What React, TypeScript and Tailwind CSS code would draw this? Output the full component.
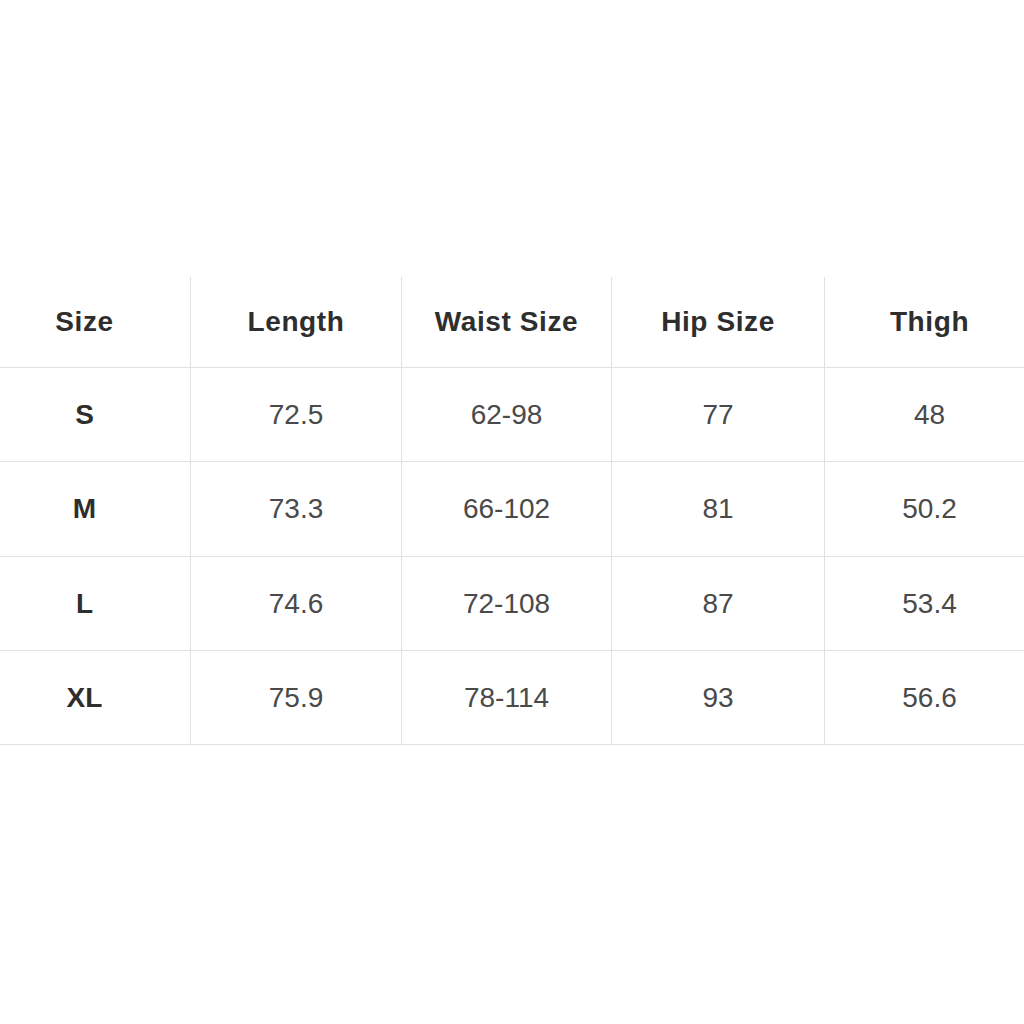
const headers = ["Size", "Length", "Waist Size", "Hip Size", "Thigh"];

const rows = [
  { size: "S", h: "h-[94px]", values: ["72.5", "62-98", "77", "48"] },
  { size: "M", h: "h-[95px]", values: ["73.3", "66-102", "81", "50.2"] },
  { size: "L", h: "h-[94px]", values: ["74.6", "72-108", "87", "53.4"] },
  { size: "XL", h: "h-[94px]", values: ["75.9", "78-114", "93", "56.6"] },
];

export default function App() {
  return (
    <div className="w-[1024px] h-[1024px] bg-white overflow-hidden font-['Liberation_Sans',Arial,sans-serif]">
      <div className="pt-[277px] ml-[-21px]">
        <div className="grid grid-cols-[212px_211px_210px_213px_209px] w-[1055px]">
          {headers.map((h, i) => (
            <div
              key={h}
              className={`h-[91px] flex items-center justify-center border-b border-[#e1e1e1] text-[28px] font-bold tracking-[0.6px] text-[#2e2e2e] ${
                i < headers.length - 1 ? "border-r" : ""
              }`}
            >
              {h}
            </div>
          ))}
          {rows.map((r) => (
            <div key={r.size} className="contents">
              <div
                className={`${r.h} flex items-center justify-center border-b border-r border-[#e1e1e1] text-[28px] font-bold text-[#2e2e2e]`}
              >
                {r.size}
              </div>
              {r.values.map((v, j) => (
                <div
                  key={j}
                  className={`${r.h} flex items-center justify-center border-b border-[#e1e1e1] text-[28px] text-[#4a4a4a] ${
                    j < r.values.length - 1 ? "border-r" : ""
                  }`}
                >
                  {v}
                </div>
              ))}
            </div>
          ))}
        </div>
      </div>
    </div>
  );
}
